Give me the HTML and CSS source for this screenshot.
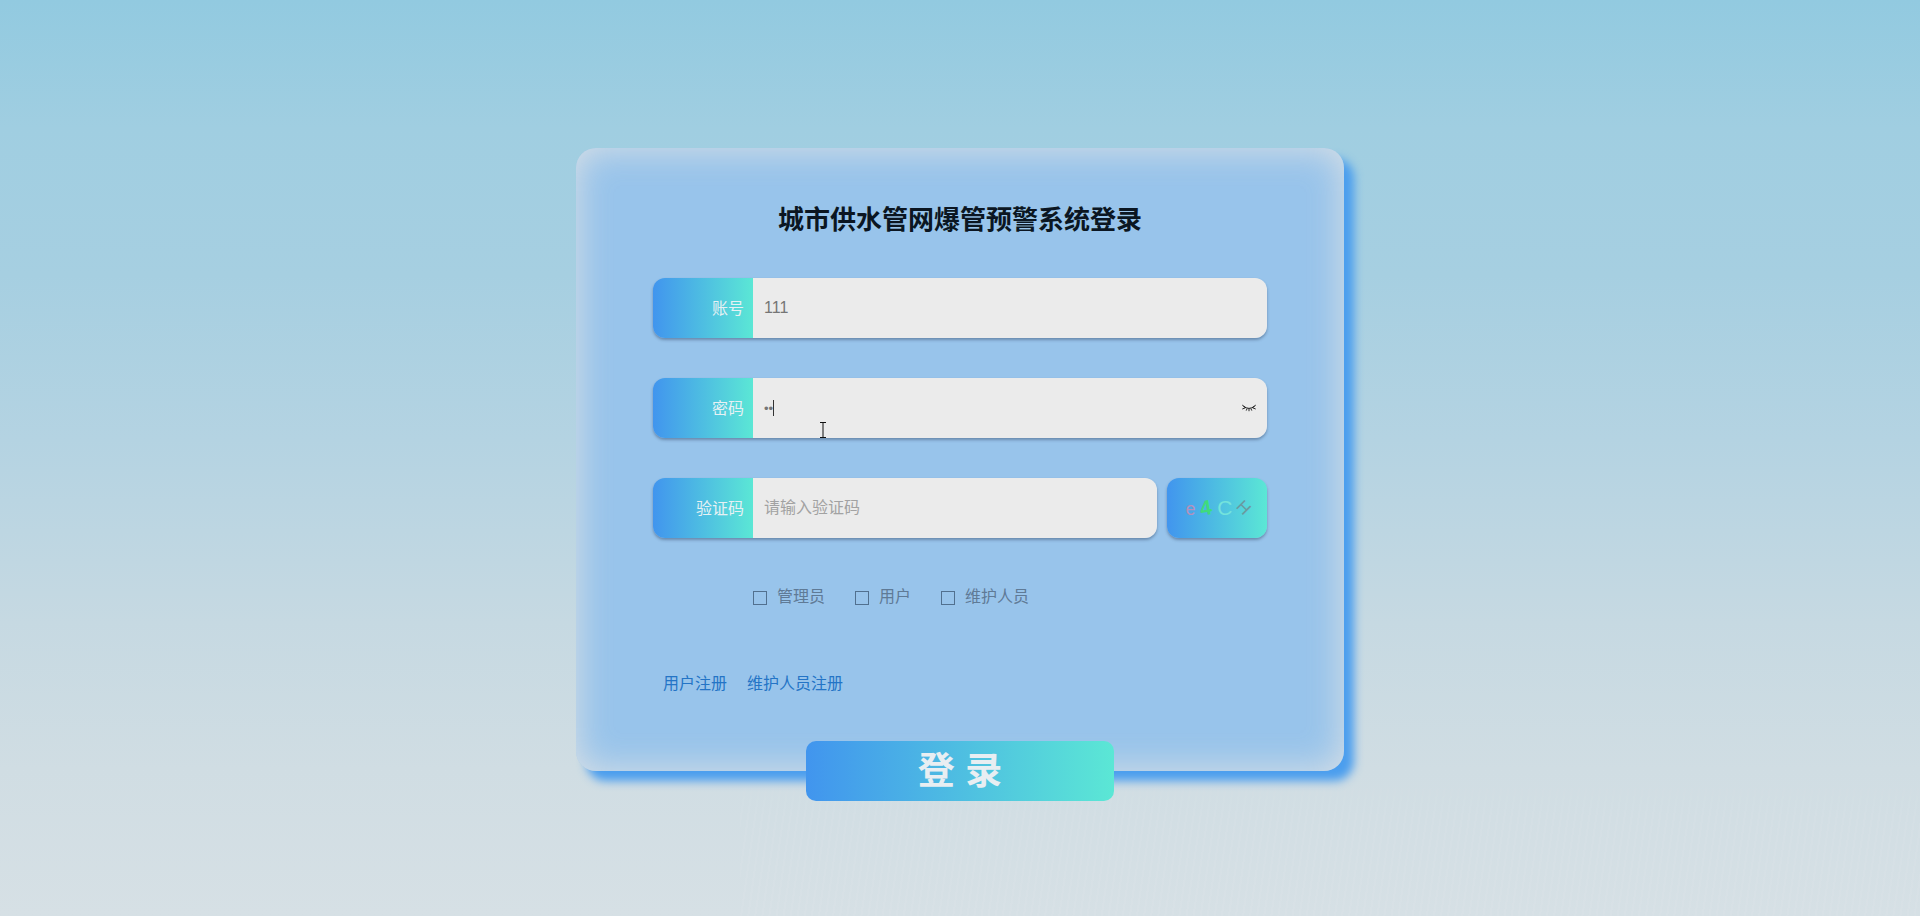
FILE: index.html
```html
<!DOCTYPE html>
<html lang="zh-CN">
<head>
<meta charset="utf-8">
<title>城市供水管网爆管预警系统登录</title>
<link rel="stylesheet" href="styles.css">
</head>
<body>
<main class="page">
  <form class="card">
    <h1 class="title">城市供水管网爆管预警系统登录</h1>
    <div class="field">
      <label class="field-label">账号</label>
      <div class="field-box"><input class="field-input" type="text" value="111"></div>
    </div>
    <div class="field">
      <label class="field-label">密码</label>
      <div class="field-box">
        <input class="field-input field-pass" type="password" value="11">
        <span class="caret"></span>
        <svg class="eye" viewBox="0 0 14 10" width="14" height="10" aria-hidden="true">
          <path d="M1.5 3.2 Q7 7.6 12.5 3.2" fill="none" stroke="#111" stroke-width="1"/>
          <path d="M0 1.6 L3 4.6 M14 1.6 L11 4.6 M0.3 6 L3.4 4.8 M13.7 6 L10.6 4.8 M4.2 7.6 L5 5.8 M9.8 7.6 L9 5.8 M7 8.2 L7 6" fill="none" stroke="#111" stroke-width="0.9"/>
        </svg>
        <svg class="ibeam" viewBox="0 0 8 16" width="8" height="16" aria-hidden="true">
          <path d="M1 0.5 H7 M1 15.5 H7 M4 0.5 V15.5" fill="none" stroke="#111" stroke-width="1"/>
        </svg>
      </div>
    </div>
    <div class="field-row">
      <div class="field field-grow">
        <label class="field-label">验证码</label>
        <div class="field-box"><input class="field-input" type="text" placeholder="请输入验证码"></div>
      </div>
      <div class="captcha">
        <span class="cap cap-e">e</span>
        <span class="cap cap-4">4</span>
        <span class="cap cap-c">C</span>
        <span class="cap cap-h">H</span>
      </div>
    </div>
    <div class="roles">
      <label class="role"><input class="role-check" type="checkbox">管理员</label>
      <label class="role"><input class="role-check" type="checkbox">用户</label>
      <label class="role"><input class="role-check" type="checkbox">维护人员</label>
    </div>
    <div class="links">
      <a class="link" href="#">用户注册</a>
      <a class="link" href="#">维护人员注册</a>
    </div>
    <button class="login" type="button">登 录</button>
  </form>
</main>
</body>
</html>
```
FILE: styles.css
```css
* { box-sizing: border-box; }
html, body { margin: 0; height: 100%; }
body {
  font-family: "Liberation Sans", "Noto Sans CJK SC", sans-serif;
  font-size: 16px;
  overflow: hidden;
  background: linear-gradient(180deg, #92cae0 0%, #a0cee1 14%, #a6cfe1 30%, #b4d3e2 48%, #c6d9e2 68%, #d0dde3 84%, #d6e0e5 100%);
  position: relative;
}
body::before {
  content: "";
  position: absolute;
  left: 740px;
  right: 0;
  bottom: 0;
  height: 150px;
  background: repeating-linear-gradient(98deg, rgba(255,255,255,.06) 0 2px, rgba(255,255,255,0) 2px 7px);
  -webkit-mask-image: linear-gradient(180deg, transparent, #000 40%);
  mask-image: linear-gradient(180deg, transparent, #000 40%);
}
.page {
  position: relative;
  display: flex;
  justify-content: center;
  padding-top: 148px;
}
.card {
  width: 768px;
  height: 623px;
  padding: 52px 77px 0;
  display: flex;
  flex-direction: column;
  border-radius: 20px;
  background: #98c4eb;
  box-shadow: inset 0 0 36px rgba(238, 232, 228, .8), 10px 10px 10px #4b9eee;
}
.title {
  margin: 0 0 38px;
  height: 40px;
  line-height: 40px;
  text-align: center;
  font-size: 26px;
  font-weight: 700;
  color: #0b1622;
}
.field {
  display: flex;
  height: 60px;
  margin-bottom: 40px;
  border-radius: 12px;
  box-shadow: 0 2px 3px rgba(40, 60, 90, .42);
}
.field-label {
  flex: 0 0 100px;
  padding: 1px 9px 0 0;
  line-height: 60px;
  text-align: right;
  color: #e6f1f4;
  border-radius: 12px 0 0 12px;
  background: linear-gradient(90deg, #4195ee, #5be7d5);
}
.field-box {
  flex: 1;
  position: relative;
  background: #ebebeb;
  border-radius: 0 12px 12px 0;
}
.field-input {
  width: 100%;
  height: 100%;
  padding: 0 40px 0 11px;
  border: 0;
  outline: 0;
  background: transparent;
  font: inherit;
  color: #757575;
}
.field-pass { font-size: 13px; }
.field-input::placeholder { color: #a2a2a2; }
.caret {
  position: absolute;
  left: 20px;
  top: 22px;
  width: 1px;
  height: 16px;
  background: #333;
}
.eye {
  position: absolute;
  right: 11px;
  top: 25px;
}
.ibeam {
  position: absolute;
  left: 66px;
  top: 44px;
}
.field-row {
  display: flex;
  gap: 10px;
  height: 60px;
  margin-bottom: 49px;
}
.field-grow { flex: 1; margin-bottom: 0; }
.captcha {
  flex: 0 0 100px;
  display: flex;
  align-items: center;
  justify-content: center;
  gap: 5px;
  padding-left: 1px;
  border-radius: 12px;
  background: linear-gradient(90deg, #4195ee, #5be7d5);
  box-shadow: 0 2px 3px rgba(40, 60, 90, .42);
  font-size: 18px;
  line-height: 20px;
}
.cap { display: block; }
.cap-e { color: #b291bd; font-size: 18px; transform: translateY(1px); }
.cap-4 { color: #3fdb7c; font-weight: 700; font-size: 21px; transform: rotate(-10deg); }
.cap-c { color: #74e3dc; font-size: 21px; }
.cap-h { color: #6a9aa0; font-size: 17px; transform: rotate(45deg); }
.roles {
  display: flex;
  gap: 30px;
  height: 20px;
  padding-left: 100px;
  line-height: 20px;
  color: #5f7a96;
}
.role { display: flex; align-items: center; }
.role-check {
  appearance: none;
  -webkit-appearance: none;
  width: 14px;
  height: 14px;
  margin: 1px 10px 0 0;
  border: 1px solid #51708f;
  border-radius: 0;
  background: transparent;
}
.links {
  display: flex;
  gap: 20px;
  height: 20px;
  margin-top: 67px;
  padding-left: 10px;
  line-height: 20px;
}
.link { color: #2474c6; text-decoration: none; }
.login {
  align-self: center;
  width: 308px;
  height: 60px;
  flex: none;
  margin-top: 47px;
  padding: 0 0 7px;
  border: 0;
  border-radius: 10px;
  background: linear-gradient(90deg, #4195ee, #5be7d5);
  font-family: inherit;
  font-size: 37px;
  font-weight: 700;
  color: #e8eef2;
}
```
